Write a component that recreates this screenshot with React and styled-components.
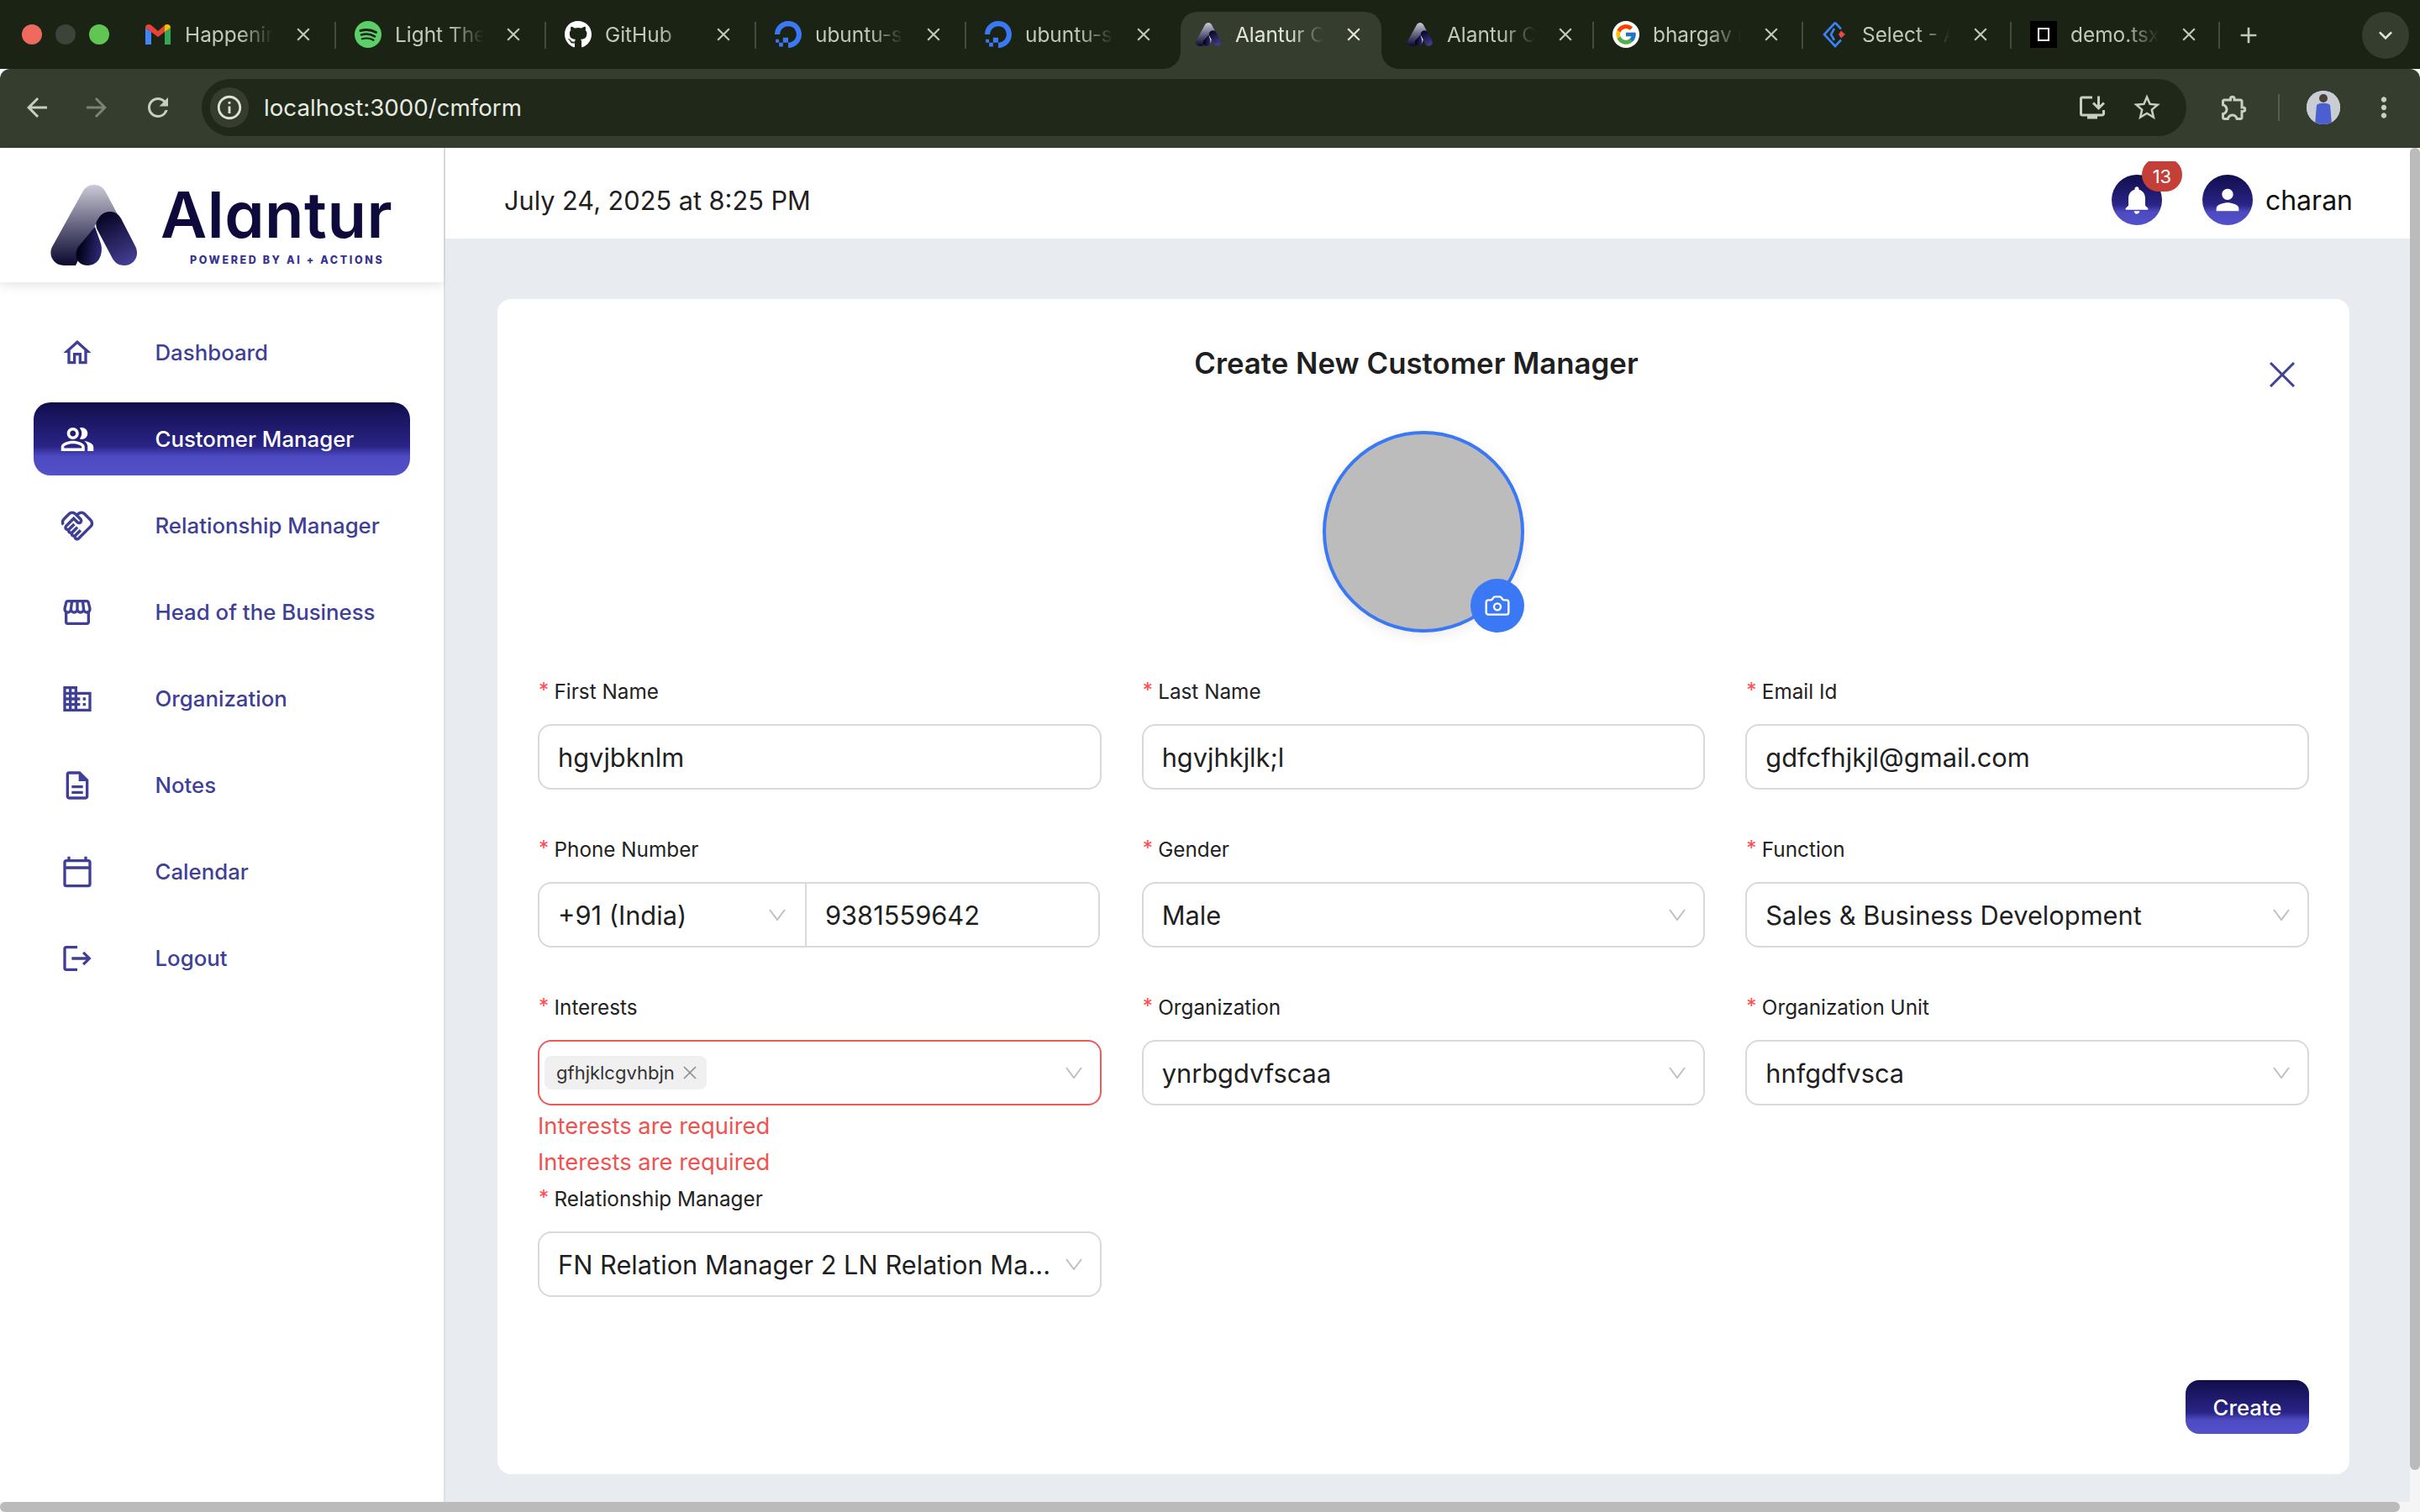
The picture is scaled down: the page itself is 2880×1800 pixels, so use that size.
import React from 'react';
import styled, { createGlobalStyle } from 'styled-components';
import { Camera } from 'lucide-react';
import { FaGithub } from 'react-icons/fa';
import { FcGoogle } from 'react-icons/fc';
import { SiDigitalocean } from 'react-icons/si';
import {
    MdAdd, MdArrowBack, MdArrowForward, MdClose, MdDomain, MdInfoOutline, MdKeyboardArrowDown, MdLogout,
    MdMoreVert, MdNotifications, MdOutlineCalendarToday, MdOutlineDescription, MdOutlineExtension,
    MdOutlineHandshake, MdOutlineHome, MdOutlineInstallDesktop, MdOutlinePeopleAlt, MdOutlineStorefront,
    MdPerson, MdRefresh, MdStarBorder,
} from 'react-icons/md';

const BRAND_GRADIENT = 'linear-gradient(180deg, #110e4c 0%, #2a2486 60%, #4d4ac2 74%, #5351c9 100%)';
const BRAND_TEXT = '#403f98';

const GlobalStyle = createGlobalStyle`
    html, body {
        margin: 0;
        padding: 0;
        overflow: hidden;
    }
    body {
        font-family: 'Inter', 'Liberation Sans', sans-serif;
    }
    * {
        box-sizing: border-box;
    }
`;

const Screen = styled.div`
    display: flex;
    flex-direction: column;
    width: 2880px;
    height: 1800px;
    background: #ffffff;
    overflow: hidden;
`;

/* browser chrome */
const TabStrip = styled.div`
    display: flex;
    align-items: flex-start;
    height: 82px;
    padding-top: 14px;
    background: #1a2314;
`;

const Lights = styled.div`
    display: flex;
    gap: 16px;
    width: 150px;
    padding: 15px 0 0 26px;
`;

const Light = styled.span`
    width: 24px;
    height: 24px;
    border-radius: 50%;
    background: ${(p) => p.$color};
`;

const Tab = styled.div`
    position: relative;
    display: flex;
    align-items: center;
    flex: none;
    width: ${(p) => p.$width}px;
    height: ${(p) => (p.$active ? '68px' : '54px')};
    margin-left: ${(p) => p.$offset || 0}px;
    padding: ${(p) => (p.$active ? '0 0 14px 17px' : '0 0 0 22px')};
    border-radius: 20px 20px 0 0;
    background: ${(p) => (p.$active ? '#343d2e' : 'transparent')};
    color: ${(p) => (p.$active ? '#e3e7db' : '#c3c9b9')};

    &::after {
        content: '';
        display: ${(p) => (p.$divider ? 'block' : 'none')};
        position: absolute;
        right: 0;
        top: 12px;
        width: 2px;
        height: 32px;
        background: #444d3d;
    }
`;

const TabCurve = styled.span`
    position: absolute;
    bottom: 0;
    width: 20px;
    height: 20px;
    ${(p) => (p.$side === 'left' ? 'left: -20px;' : 'right: -20px;')}
    background: radial-gradient(circle at ${(p) => (p.$side === 'left' ? '0 0' : '100% 0')}, #1a2314 19.5px, #343d2e 20px);
`;

const Favicon = styled.span`
    display: flex;
    align-items: center;
    justify-content: center;
    flex: none;
    width: 32px;
    height: 32px;
    border-radius: ${(p) => (p.$round ? '50%' : '0')};
    background: ${(p) => p.$bg || 'transparent'};
    color: ${(p) => p.$color || 'inherit'};
`;

const TabTitle = styled.span`
    width: 112px;
    margin-left: 16px;
    font-size: 24.4px;
    line-height: 32px;
    white-space: nowrap;
    -webkit-mask-image: linear-gradient(90deg, #000 58%, transparent 94%);
    mask-image: linear-gradient(90deg, #000 58%, transparent 94%);
`;

const TabClose = styled.span`
    display: flex;
    margin-left: 16px;
`;

const NewTab = styled.span`
    display: flex;
    margin: 12px 0 0 18px;
    color: #c3c9b9;
`;

const TabMenu = styled.span`
    display: flex;
    align-items: center;
    justify-content: center;
    width: 56px;
    height: 56px;
    margin-left: auto;
    margin-right: 13px;
    border-radius: 50%;
    background: #343d2e;
    color: #dfe3d7;
`;

const Toolbar = styled.div`
    display: flex;
    align-items: center;
    height: 94px;
    padding: 12px 0 14px 26px;
    background: #343d2e;
    border-radius: 12px 12px 0 0;
    color: #c9cfbf;
`;

const NavButton = styled.span`
    display: flex;
    width: 36px;
    margin-right: ${(p) => p.$gap}px;
    color: ${(p) => (p.$muted ? '#7b8373' : '#c9cfbf')};
`;

const Omnibox = styled.div`
    display: flex;
    align-items: center;
    flex: none;
    width: 2362px;
    height: 68px;
    padding: 0 28px 0 10px;
    border-radius: 34px;
    background: #1f2819;
`;

const SiteInfo = styled.span`
    display: flex;
    align-items: center;
    justify-content: center;
    width: 46px;
    height: 48px;
    border-radius: 24px;
    background: #343d2e;
    color: #dfe3d7;
`;

const Url = styled.span`
    margin-left: 18px;
    font-size: 27.7px;
    color: #e8ebe2;
`;

const OmniActions = styled.span`
    display: flex;
    align-items: center;
    gap: 28px;
    margin-left: auto;
`;

const ToolbarEnd = styled.div`
    display: flex;
    align-items: center;
    flex: 1;
    padding-left: 39px;
`;

const ToolbarDivider = styled.span`
    width: 2px;
    height: 32px;
    margin: 0 32px 0 34px;
    background: #545c4c;
`;

const ProfileShot = styled.span`
    display: block;
    width: 40px;
    height: 40px;
    margin-right: 33px;
    border-radius: 50%;
    overflow: hidden;
    background: #c9ccd2;
`;

/* page */
const Body = styled.div`
    display: grid;
    grid-template-columns: 1fr 12px;
    grid-template-rows: 1fr 12px;
    flex: 1;
    min-height: 0;
    background: #f5f5f5;
`;

const ScrollThumbY = styled.div`
    height: 1574px;
    border-radius: 6px;
    background: #bbbbbb;
`;

const ScrollThumbX = styled.div`
    width: 2856px;
    height: 12px;
    border-radius: 6px;
    background: #bbbbbb;
`;

const Layout = styled.div`
    display: flex;
    min-height: 0;
`;

const Sidebar = styled.aside`
    flex: none;
    width: 530px;
    background: #ffffff;
    border-right: 2px solid #e0e0e0;
`;

const Brand = styled.div`
    display: flex;
    align-items: flex-start;
    height: 160px;
    padding: 44px 0 0 60px;
    box-shadow: 0 4px 12px rgba(0, 0, 0, 0.1);
`;

const LogoSvg = styled.svg`
    flex: none;
`;

const BrandText = styled.div`
    display: flex;
    flex-direction: column;
    margin: 4px 0 0 27px;
`;

const BrandName = styled.span`
    font-size: 76px;
    line-height: 62px;
    font-weight: 600;
    letter-spacing: 0.5px;
    color: #0e0b3c;
    font-feature-settings: 'cv11' 1;
`;

const BrandTag = styled.span`
    margin: 17px 0 0 35px;
    font-size: 12.5px;
    line-height: 14px;
    font-weight: 800;
    letter-spacing: 2.6px;
    color: #37348f;
    white-space: nowrap;
`;

const Nav = styled.nav`
    display: flex;
    flex-direction: column;
    gap: 16px;
    padding: 40px 40px 0;
`;

const NavItem = styled.div`
    display: flex;
    align-items: center;
    height: 87px;
    padding-left: 31px;
    border-radius: 20px;
    background: ${(p) => (p.$active ? BRAND_GRADIENT : 'transparent')};
    color: ${(p) => (p.$active ? '#ffffff' : BRAND_TEXT)};
`;

const NavIcon = styled.span`
    display: flex;
    justify-content: center;
    width: 42px;
`;

const NavLabel = styled.span`
    margin-left: 71.5px;
    font-size: 25.8px;
    font-weight: 450;
`;

const Main = styled.main`
    display: flex;
    flex-direction: column;
    flex: 1;
    min-width: 0;
    background: #e8ebf0;
`;

const TopBar = styled.header`
    display: flex;
    align-items: center;
    flex: none;
    height: 108px;
    padding: 16px 68px 0 70px;
    background: #ffffff;
`;

const DateText = styled.span`
    font-size: 30.7px;
    color: #1f1f1f;
`;

const TopActions = styled.div`
    display: flex;
    align-items: center;
    margin-left: auto;
`;

const RoundIcon = styled.span`
    position: relative;
    display: flex;
    align-items: center;
    justify-content: center;
    width: 60px;
    height: 60px;
    margin-right: ${(p) => p.$gap}px;
    border-radius: 50%;
    background: ${BRAND_GRADIENT};
    color: #ffffff;
`;

const Badge = styled.span`
    position: absolute;
    top: -20px;
    left: 36px;
    display: flex;
    align-items: center;
    justify-content: center;
    width: 48px;
    height: 40px;
    padding-top: 4px;
    border-radius: 20px;
    background: #c33f37;
    font-size: 22px;
    clip-path: inset(4px 0 0 0);
`;

const UserName = styled.span`
    font-size: 32px;
    color: #111111;
`;

const Content = styled.div`
    display: flex;
    flex: 1;
    min-height: 0;
    padding: 72px 72px 33px 62px;
`;

const Card = styled.section`
    display: flex;
    flex-direction: column;
    flex: 1;
    min-width: 0;
    padding: 52px 48px 48px;
    border-radius: 16px;
    background: #ffffff;
`;

const CardHead = styled.div`
    display: flex;
    justify-content: space-between;
    align-items: flex-start;
    padding-right: 17px;
`;

const HeadSpacer = styled.span`
    width: 30px;
`;

const CardTitle = styled.h1`
    margin: 0;
    font-size: 34.8px;
    line-height: 48px;
    font-weight: 600;
    color: #1f1f1f;
`;

const CloseButton = styled.span`
    display: block;
    width: 30px;
    height: 30px;
    margin-top: 23px;
`;

const AvatarWrap = styled.div`
    position: relative;
    align-self: center;
    width: 240px;
    height: 240px;
    margin-top: 52px;
    border: 4px solid #3b78f6;
    border-radius: 50%;
    background: #bcbcbc;
    box-shadow: 0 4px 16px rgba(0, 0, 0, 0.08);
`;

const CameraButton = styled.span`
    position: absolute;
    right: -4px;
    bottom: -4px;
    display: flex;
    align-items: center;
    justify-content: center;
    width: 64px;
    height: 64px;
    border-radius: 50%;
    background: #3b78f6;
    color: #ffffff;
`;

const FormGrid = styled.div`
    display: grid;
    grid-template-columns: repeat(3, minmax(0, 1fr));
    column-gap: 48px;
    margin-top: 51px;
`;

const Field = styled.div`
    min-width: 0;
    padding-bottom: ${(p) => (p.$tight ? '3px' : '52px')};
`;

const Label = styled.div`
    display: flex;
    height: 38px;
    margin-bottom: 20px;
    align-items: center;
    font-size: 24.3px;
    color: #222222;

    &::before {
        content: '*';
        width: 18.5px;
        margin-top: -4px;
        padding-left: 1px;
        color: #ff4d4f;
    }
`;

const TextInput = styled.input`
    display: block;
    width: 100%;
    height: 78px;
    padding: 0 22px;
    border: 2px solid #d9d9d9;
    border-radius: 16px;
    outline: none;
    background: #ffffff;
    font-family: inherit;
    font-size: 30.8px;
    color: #1f1f1f;
`;

const SelectBox = styled.div`
    display: flex;
    align-items: center;
    height: 78px;
    padding: 0 21px 0 22px;
    border: 2px solid ${(p) => (p.$error ? '#ee5a58' : '#d9d9d9')};
    border-radius: 16px;
    background: #ffffff;
    font-size: 30.8px;
    color: #1f1f1f;
`;

const SelectValue = styled.span`
    flex: 1;
    min-width: 0;
    white-space: nowrap;
`;

const Chevron = styled.svg`
    flex: none;
    width: 20px;
    height: 14px;
    margin-left: 8px;
`;

const PhoneGroup = styled.div`
    display: flex;
    height: 78px;
    margin-right: 2px;
    border: 2px solid #d9d9d9;
    border-radius: 16px;
    overflow: hidden;
`;

const DialCode = styled.div`
    display: flex;
    align-items: center;
    flex: none;
    width: 318px;
    padding: 0 23px 0 22px;
    border-right: 2px solid #d9d9d9;
    font-size: 30.8px;
    color: #1f1f1f;
`;

const PhoneInput = styled.input`
    flex: 1;
    min-width: 0;
    padding: 0 22px;
    border: none;
    outline: none;
    font-family: inherit;
    font-size: 30.8px;
    color: #1f1f1f;
`;

const TagBox = styled(SelectBox)`
    padding-left: 6px;
`;

const TagList = styled.div`
    display: flex;
    flex: 1;
`;

const Tag = styled.span`
    display: flex;
    align-items: center;
    gap: 10px;
    height: 40px;
    padding: 0 12px 0 14px;
    border-radius: 8px;
    background: #f0f0f0;
    font-size: 22px;
    color: #333333;
`;

const ErrorList = styled.div`
    padding-top: 3px;
`;

const ErrorText = styled.div`
    font-size: 27.4px;
    line-height: 43px;
    color: #ef5350;
`;

const Footer = styled.div`
    display: flex;
    justify-content: flex-end;
    margin-top: auto;
`;

const CreateButton = styled.button`
    width: 147px;
    height: 64px;
    border: none;
    border-radius: 16px;
    background: ${BRAND_GRADIENT};
    font-family: inherit;
    font-size: 25.7px;
    font-weight: 450;
    color: #ffffff;
`;

function LogoMark({ id, width }) {
    return (
        <LogoSvg width={width} height={width * 96 / 104} viewBox="0 0 104 96">
            <defs>
                <linearGradient id={`${id}-limb`} gradientUnits="userSpaceOnUse" x1="0" y1="0" x2="0" y2="96">
                    <stop offset="0" stopColor="#cbcad5" />
                    <stop offset="0.55" stopColor="#5c5a78" />
                    <stop offset="1" stopColor="#0a082e" />
                </linearGradient>
                <linearGradient id={`${id}-leg`} gradientUnits="userSpaceOnUse" x1="60" y1="34" x2="92" y2="96">
                    <stop offset="0" stopColor="#05031f" />
                    <stop offset="1" stopColor="#453f95" />
                </linearGradient>
                <linearGradient id={`${id}-foot`} gradientUnits="userSpaceOnUse" x1="34" y1="80" x2="60" y2="84">
                    <stop offset="0" stopColor="#030218" />
                    <stop offset="1" stopColor="#2d2a78" />
                </linearGradient>
            </defs>
            <path fill={`url(#${id}-limb)`} d="M52 0C58 0 63 3 66 9L92 58L70 50L54 47L30 96H16C4 96 -3 84 2 74L38 9C41 3 46 0 52 0Z" />
            <path fill="#ffffff" d="M53 47L66 68L60 86Z" />
            <path fill={`url(#${id}-foot)`} d="M53 50L60 70C63 80 59 96 44 96C32 96 27 84 33 74Z" />
            <path fill={`url(#${id}-leg)`} d="M56 42C59 36 64 32 71 32C77 32 81 35 84 40L101 73C107 85 99 96 88 96C80 96 76 92 73 86L55 52C54 48 54 45 56 42Z" />
        </LogoSvg>
    );
}

function GmailIcon() {
    return (
        <svg width="30" height="26" viewBox="0 0 30 24">
            <path fill="#4285f4" d="M0 4V24H7V9Z" />
            <path fill="#34a853" d="M23 9V24H30V4Z" />
            <path fill="#ea4335" d="M0 4C0 0 4 -1 7 1L15 8L23 1V9L15 15L0 4Z" />
            <path fill="#fbbc04" d="M23 1C26 -1 30 0 30 4L23 9Z" />
        </svg>
    );
}

function SpotifyIcon() {
    return (
        <svg width="32" height="32" viewBox="0 0 32 32">
            <circle cx="16" cy="16" r="16" fill="#5dcf68" />
            <g fill="none" stroke="#1a2314" strokeLinecap="round">
                <path strokeWidth="3" d="M7 11.5C13 9.8 20 10.3 25.5 13.5" />
                <path strokeWidth="2.6" d="M8 16.5C13 15 19.5 15.6 24 18.4" />
                <path strokeWidth="2.2" d="M9 21.2C13.5 20 18.5 20.4 22.5 22.8" />
            </g>
        </svg>
    );
}

function AntIcon() {
    return (
        <svg width="32" height="32" viewBox="0 0 32 32">
            <path fill="none" stroke="#3b82f6" strokeWidth="2.6" d="M16 2L3 16L16 30L23 22.5M16 2L23 9.5M15 9L11 16L15 23" />
            <path fill="#e5484d" d="M23 11.5L28 16L23 20.5L20 16Z" />
        </svg>
    );
}

function DemoIcon() {
    return (
        <svg width="32" height="32" viewBox="0 0 32 32">
            <rect width="32" height="32" fill="#000000" />
            <rect x="10" y="9" width="12" height="14" fill="none" stroke="#ffffff" strokeWidth="2" />
        </svg>
    );
}

function ProfilePhoto() {
    return (
        <svg width="40" height="40" viewBox="0 0 40 40">
            <rect width="40" height="40" fill="#c9ccd2" />
            <circle cx="20" cy="9" r="5" fill="#4a4038" />
            <path fill="#4a5fd0" d="M12 17C15 14 25 14 28 17L30 40H10Z" />
        </svg>
    );
}

function DownArrow() {
    return (
        <Chevron viewBox="0 0 20 14">
            <path fill="none" stroke="#bfbfbf" strokeWidth="2" d="M1 1L10 13L19 1" />
        </Chevron>
    );
}

const tabs = [
    { title: 'Happenin', width: 250, divider: true, icon: <GmailIcon /> },
    { title: 'Light The', width: 250, divider: true, icon: <SpotifyIcon /> },
    { title: 'GitHub', width: 250, divider: true, icon: <FaGithub size={34} color="#ffffff" /> },
    { title: 'ubuntu-s', width: 250, divider: true, icon: <SiDigitalocean size={32} color="#3b78f6" /> },
    { title: 'ubuntu-s', width: 250, icon: <SiDigitalocean size={32} color="#3b78f6" /> },
    { title: 'Alantur C', width: 239, offset: 5, active: true, icon: <LogoMark id="tab-a" width={30} /> },
    { title: 'Alantur C', width: 245, offset: 8, divider: true, icon: <LogoMark id="tab-b" width={30} /> },
    { title: 'bhargav r', width: 249, divider: true, icon: <FcGoogle size={28} />, round: true, bg: '#ffffff' },
    { title: 'Select - A', width: 248, divider: true, icon: <AntIcon /> },
    { title: 'demo.tsx', width: 248, divider: true, icon: <DemoIcon /> },
];

const navItems = [
    { label: 'Dashboard', icon: <MdOutlineHome size={40} /> },
    { label: 'Customer Manager', icon: <MdOutlinePeopleAlt size={42} />, active: true },
    { label: 'Relationship Manager', icon: <MdOutlineHandshake size={42} /> },
    { label: 'Head of the Business', icon: <MdOutlineStorefront size={40} /> },
    { label: 'Organization', icon: <MdDomain size={40} /> },
    { label: 'Notes', icon: <MdOutlineDescription size={40} /> },
    { label: 'Calendar', icon: <MdOutlineCalendarToday size={40} /> },
    { label: 'Logout', icon: <MdLogout size={40} /> },
];

function BrowserChrome() {
    return (
        <>
            <TabStrip>
                <Lights>
                    <Light $color="#ee6a5f" />
                    <Light $color="#3c4339" />
                    <Light $color="#61c554" />
                </Lights>
                {tabs.map((tab, i) => (
                    <Tab key={i} $width={tab.width} $offset={tab.offset} $active={tab.active} $divider={tab.divider}>
                        {tab.active && <TabCurve $side="left" />}
                        {tab.active && <TabCurve $side="right" />}
                        <Favicon $round={tab.round} $bg={tab.bg}>{tab.icon}</Favicon>
                        <TabTitle>{tab.title}</TabTitle>
                        <TabClose><MdClose size={26} /></TabClose>
                    </Tab>
                ))}
                <NewTab><MdAdd size={32} /></NewTab>
                <TabMenu><MdKeyboardArrowDown size={32} /></TabMenu>
            </TabStrip>
            <Toolbar>
                <NavButton $gap={35}><MdArrowBack size={36} /></NavButton>
                <NavButton $gap={37} $muted><MdArrowForward size={36} /></NavButton>
                <NavButton $gap={34}><MdRefresh size={36} /></NavButton>
                <Omnibox>
                    <SiteInfo><MdInfoOutline size={34} /></SiteInfo>
                    <Url>localhost:3000/cmform</Url>
                    <OmniActions>
                        <MdOutlineInstallDesktop size={36} />
                        <MdStarBorder size={38} />
                    </OmniActions>
                </Omnibox>
                <ToolbarEnd>
                    <MdOutlineExtension size={36} />
                    <ToolbarDivider />
                    <ProfileShot><ProfilePhoto /></ProfileShot>
                    <MdMoreVert size={38} />
                </ToolbarEnd>
            </Toolbar>
        </>
    );
}

function SideMenu() {
    return (
        <Sidebar>
            <Brand>
                <LogoMark id="brand" width={104} />
                <BrandText>
                    <BrandName>Alantur</BrandName>
                    <BrandTag>POWERED BY AI + ACTIONS</BrandTag>
                </BrandText>
            </Brand>
            <Nav>
                {navItems.map((item) => (
                    <NavItem key={item.label} $active={item.active}>
                        <NavIcon>{item.icon}</NavIcon>
                        <NavLabel>{item.label}</NavLabel>
                    </NavItem>
                ))}
            </Nav>
        </Sidebar>
    );
}

function CustomerForm() {
    return (
        <Card>
            <CardHead>
                <HeadSpacer />
                <CardTitle>Create New Customer Manager</CardTitle>
                <CloseButton>
                    <svg width="30" height="30" viewBox="0 0 30 30">
                        <path stroke="#3f3f9a" strokeWidth="3" d="M1 1L29 29M29 1L1 29" />
                    </svg>
                </CloseButton>
            </CardHead>
            <AvatarWrap>
                <CameraButton><Camera size={32} strokeWidth={1.8} /></CameraButton>
            </AvatarWrap>
            <FormGrid>
                <Field>
                    <Label>First Name</Label>
                    <TextInput readOnly value="hgvjbknlm" />
                </Field>
                <Field>
                    <Label>Last Name</Label>
                    <TextInput readOnly value="hgvjhkjlk;l" />
                </Field>
                <Field>
                    <Label>Email Id</Label>
                    <TextInput readOnly value="gdfcfhjkjl@gmail.com" />
                </Field>
                <Field>
                    <Label>Phone Number</Label>
                    <PhoneGroup>
                        <DialCode>
                            <SelectValue>+91 (India)</SelectValue>
                            <DownArrow />
                        </DialCode>
                        <PhoneInput readOnly value="9381559642" />
                    </PhoneGroup>
                </Field>
                <Field>
                    <Label>Gender</Label>
                    <SelectBox>
                        <SelectValue>Male</SelectValue>
                        <DownArrow />
                    </SelectBox>
                </Field>
                <Field>
                    <Label>Function</Label>
                    <SelectBox>
                        <SelectValue>Sales &amp; Business Development</SelectValue>
                        <DownArrow />
                    </SelectBox>
                </Field>
                <Field $tight>
                    <Label>Interests</Label>
                    <TagBox $error>
                        <TagList>
                            <Tag>
                                gfhjklcgvhbjn
                                <svg width="16" height="16" viewBox="0 0 16 16">
                                    <path stroke="#8c8c8c" strokeWidth="1.6" d="M1 1L15 15M15 1L1 15" />
                                </svg>
                            </Tag>
                        </TagList>
                        <DownArrow />
                    </TagBox>
                    <ErrorList>
                        <ErrorText>Interests are required</ErrorText>
                        <ErrorText>Interests are required</ErrorText>
                    </ErrorList>
                </Field>
                <Field>
                    <Label>Organization</Label>
                    <SelectBox>
                        <SelectValue>ynrbgdvfscaa</SelectValue>
                        <DownArrow />
                    </SelectBox>
                </Field>
                <Field>
                    <Label>Organization Unit</Label>
                    <SelectBox>
                        <SelectValue>hnfgdfvsca</SelectValue>
                        <DownArrow />
                    </SelectBox>
                </Field>
                <Field>
                    <Label>Relationship Manager</Label>
                    <SelectBox>
                        <SelectValue>FN Relation Manager 2 LN Relation Ma...</SelectValue>
                        <DownArrow />
                    </SelectBox>
                </Field>
            </FormGrid>
            <Footer>
                <CreateButton>Create</CreateButton>
            </Footer>
        </Card>
    );
}

export default function App() {
    return (
        <Screen>
            <GlobalStyle />
            <BrowserChrome />
            <Body>
                <Layout>
                    <SideMenu />
                    <Main>
                        <TopBar>
                            <DateText>July 24, 2025 at 8:25 PM</DateText>
                            <TopActions>
                                <RoundIcon $gap={48}>
                                    <MdNotifications size={40} />
                                    <Badge>13</Badge>
                                </RoundIcon>
                                <RoundIcon $gap={15}><MdPerson size={40} /></RoundIcon>
                                <UserName>charan</UserName>
                            </TopActions>
                        </TopBar>
                        <Content>
                            <CustomerForm />
                        </Content>
                    </Main>
                </Layout>
                <ScrollThumbY />
                <ScrollThumbX />
            </Body>
        </Screen>
    );
}
